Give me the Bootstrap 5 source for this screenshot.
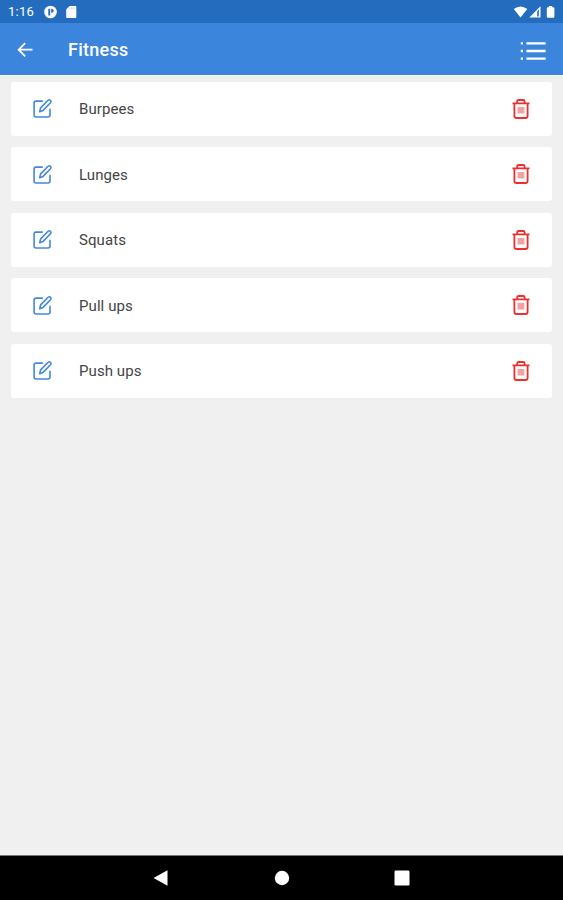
<!DOCTYPE html>
<html lang="en">
<head>
<meta charset="utf-8">
<meta name="viewport" content="width=device-width, initial-scale=1">
<title>Fitness</title>
<link href="https://cdn.jsdelivr.net/npm/bootstrap@5.3.0/dist/css/bootstrap.min.css" rel="stylesheet">
<style>
  body { font-family: Roboto, "Liberation Sans", sans-serif; background: #f0f0f0; height: 900px; overflow: hidden; }
  svg { display: block; flex: none; }
  .status-bar { height: 23px; background: #246dbe; padding: 1px 7px 0 8px; font-size: 13px; line-height: 22px; }
  .status-time { width: 36px; letter-spacing: .25px; }
  .app-bar { height: 52px; background: #3c85dc; padding: 1px 17px 0 17px; }
  .app-title { font-size: 18px; font-weight: 500; line-height: 24px; margin: 1px 0 0 35px; letter-spacing: .27px; }
  .list-icon { margin-top: 3px; }
  .exercise-list { padding: 5.5px 11px 0; gap: 11.6px; border-top: 1px solid #f8fafb; }
  .exercise { height: 54px; border-radius: 3px; padding: 0 21px 0 21px; }
  .exercise-name { font-size: 15px; line-height: 20px; color: #444; margin-left: 26px; padding-top: 1px; letter-spacing: .08px; }
  .system-nav { height: 45px; background: #000; border-top: 1px solid #777; padding: 0 153px 0 153px; }
</style>
<script src="https://cdn.jsdelivr.net/npm/bootstrap@5.3.0/dist/js/bootstrap.bundle.min.js"></script>
</head>
<body class="d-flex flex-column">
<svg width="0" height="0" class="position-absolute" aria-hidden="true">
  <symbol id="edit" viewBox="0 0 21 21" fill="none" stroke="#4388dc" stroke-width="1.6" stroke-linejoin="round" stroke-linecap="round">
    <path d="M10.3 3.1H4.1Q2.1 3.1 2.1 5V17Q2.1 19 4.1 19H16Q18 19 18 17V11.2"/>
    <path d="M7.7 13.7L8.6 9.9L16.1 2.3Q17.2 1.2 18.5 2.3Q19.6 3.6 18.5 4.8L11.1 12.4Z"/>
  </symbol>
  <symbol id="trash" viewBox="0 0 20 22" fill="none" stroke="#ed2f2f" stroke-width="1.8" stroke-linejoin="round">
    <path d="M1.5 5.3H18.5M6.2 5V3.4Q6.2 2 7.6 2H12.2Q13.6 2 13.6 3.4V5M3.4 5.3V18Q3.4 20 5.4 20H14.6Q16.6 20 16.6 18V5.3"/>
    <path d="M6.5 9H13.4V15.5H6.5Z" fill="#f4a1a1" stroke="none"/>
  </symbol>
</svg>

<div class="status-bar d-flex align-items-center text-white">
  <span class="status-time">1:16</span>
  <svg width="13" height="14" viewBox="0 0 13 14"><circle cx="6.5" cy="7" r="6.3" fill="#fff"/><path d="M4.3 3.7H6.2V10.5H4.3ZM7.2 3.7H8Q9.7 4 9.7 5.7T8 7.7H7.2Z" fill="#246dbe"/></svg>
  <svg class="ms-2" width="13" height="14" viewBox="0 0 13 14"><path d="M4.6 1H10.5Q11.3 1 11.3 1.8V12.2Q11.3 13 10.5 13H2Q1.2 13 1.2 12.2V4.4Z" fill="#fff"/><path d="M4.9 2.5V4.2M6.9 2.5V4.2M8.9 2.5V4.2" stroke="#a8c7e8" stroke-width=".8"/></svg>
  <svg class="ms-auto" width="43" height="14" viewBox="0 0 43 14" fill="#fff"><path d="M.8 4Q7.5-1.2 14.3 4L7.5 12.5Z"/><path d="M16.3 12.6L27.5 1.2V12.6Z"/><path d="M24 6.2V11.5H26V4.2Z" fill="#4b86c9"/><path d="M35.8 1H39.2V2.2H40.2Q41.4 2.2 41.4 3.4V11.6Q41.4 12.8 40.2 12.8H35Q33.8 12.8 33.8 11.6V3.4Q33.8 2.2 35 2.2H35.8Z"/></svg>
</div>

<header class="app-bar d-flex align-items-center text-white">
  <svg width="16" height="16" viewBox="0 0 16 16" fill="none" stroke="#fff" stroke-width="1.8"><path d="M15.5 7.7H2M8.2 1.1L1.6 7.7L8.2 14.3"/></svg>
  <h1 class="app-title">Fitness</h1>
  <svg class="list-icon ms-auto" width="26" height="20" viewBox="0 0 26 20" stroke="#fff" stroke-width="2.4"><path d="M.8 2.4H3M.8 10H3M.8 17.6H3M6.4 2.4H25.7M6.4 10H25.7M6.4 17.6H25.7"/></svg>
</header>

<main class="exercise-list d-flex flex-column flex-grow-1">
  <div class="exercise bg-white d-flex align-items-center"><svg width="21" height="21"><use href="#edit"/></svg><span class="exercise-name">Burpees</span><svg class="ms-auto" width="20" height="22"><use href="#trash"/></svg></div>
  <div class="exercise bg-white d-flex align-items-center"><svg width="21" height="21"><use href="#edit"/></svg><span class="exercise-name">Lunges</span><svg class="ms-auto" width="20" height="22"><use href="#trash"/></svg></div>
  <div class="exercise bg-white d-flex align-items-center"><svg width="21" height="21"><use href="#edit"/></svg><span class="exercise-name">Squats</span><svg class="ms-auto" width="20" height="22"><use href="#trash"/></svg></div>
  <div class="exercise bg-white d-flex align-items-center"><svg width="21" height="21"><use href="#edit"/></svg><span class="exercise-name">Pull ups</span><svg class="ms-auto" width="20" height="22"><use href="#trash"/></svg></div>
  <div class="exercise bg-white d-flex align-items-center"><svg width="21" height="21"><use href="#edit"/></svg><span class="exercise-name">Push ups</span><svg class="ms-auto" width="20" height="22"><use href="#trash"/></svg></div>
</main>

<nav class="system-nav d-flex align-items-center justify-content-between">
  <svg width="16" height="16" viewBox="0 0 16 16" fill="#fff"><path d="M.5 8L14.5 .3V15.7Z"/></svg>
  <svg width="16" height="16" viewBox="0 0 16 16" fill="#fff"><circle cx="8" cy="8" r="7.2"/></svg>
  <svg width="16" height="16" viewBox="0 0 16 16" fill="#fff"><rect x=".5" y=".5" width="15" height="15" rx="1.3"/></svg>
</nav>
</body>
</html>
